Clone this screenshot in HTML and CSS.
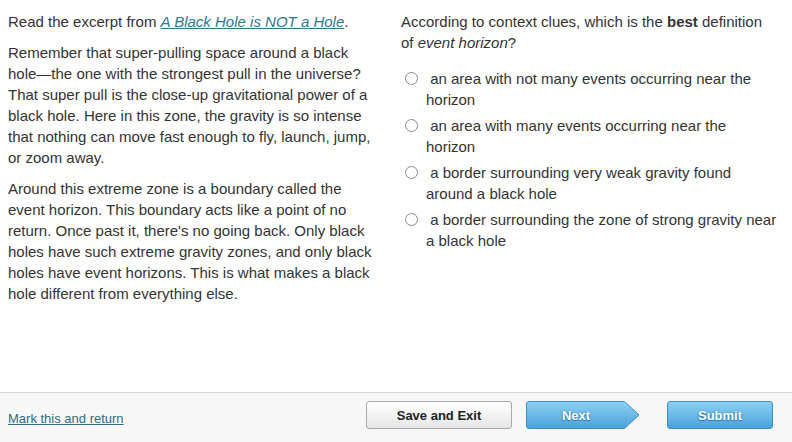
FILE: index.html
```html
<!DOCTYPE html>
<html>
<head>
<meta charset="utf-8">
<link rel="stylesheet" href="styles.css">
</head>
<body>
<div class="page">
  <main class="content">
    <section class="passage">
      <p>Read the excerpt from <a class="cite" href="#">A Black Hole is NOT a Hole</a>.</p>
      <p>Remember that super-pulling space around a black hole—the one with the strongest pull in the universe? That super pull is the close-up gravitational power of a black hole. Here in this zone, the gravity is so intense that nothing can move fast enough to fly, launch, jump, or zoom away.</p>
      <p>Around this extreme zone is a boundary called the event horizon. This boundary acts like a point of no return. Once past it, there's no going back. Only black holes have such extreme gravity zones, and only black holes have event horizons. This is what makes a black hole different from everything else.</p>
    </section>
    <section class="question">
      <p class="prompt">According to context clues, which is the <b>best</b> definition of <i>event horizon</i>?</p>
      <ul class="options">
        <li class="option"><span class="radio"></span><span class="label">&nbsp;an area with not many events occurring near the horizon</span></li>
        <li class="option"><span class="radio"></span><span class="label">&nbsp;an area with many events occurring near the horizon</span></li>
        <li class="option"><span class="radio"></span><span class="label">&nbsp;a border surrounding very weak gravity found around a black hole</span></li>
        <li class="option"><span class="radio"></span><span class="label">&nbsp;a border surrounding the zone of strong gravity near a black hole</span></li>
      </ul>
    </section>
  </main>
  <footer class="footer">
    <a class="mark" href="#">Mark this and return</a>
    <div class="actions">
      <button class="btn btn-save">Save and Exit</button>
      <button class="btn btn-next">
        <svg class="next-shape" width="114" height="28" viewBox="0 0 114 28">
          <defs>
            <linearGradient id="ng" x1="0" y1="0" x2="0" y2="1">
              <stop offset="0" stop-color="#8fd0f4"/>
              <stop offset="1" stop-color="#4aa2dc"/>
            </linearGradient>
          </defs>
          <path d="M3 0.5 H98.5 L113 14 L98.5 27.5 H3 Q0.5 27.5 0.5 25 V3 Q0.5 0.5 3 0.5 Z" fill="url(#ng)" stroke="#3f8fc4" stroke-width="1"/>
        </svg>
        <span class="next-text">Next</span>
      </button>
      <button class="btn btn-submit">Submit</button>
    </div>
  </footer>
</div>
</body>
</html>
```
FILE: styles.css
```css
html, body {
  margin: 0;
  padding: 0;
  background: #fff;
}
body {
  font-family: "Liberation Sans", Arial, sans-serif;
  color: #333;
  font-size: 15px;
  line-height: 21px;
}
.page {
  width: 792px;
  height: 442px;
  display: flex;
  flex-direction: column;
}
.content {
  flex: 1;
  display: grid;
  grid-template-columns: 368px 1fr;
  column-gap: 25px;
  padding: 11px 14px 0 8px;
}
.passage p {
  margin: 0 0 10px 0;
}
.cite {
  color: #2b7a8e;
  font-style: italic;
  text-decoration: underline;
}
.prompt {
  margin: 0 0 15px 0;
  max-width: 368px;
}
.options {
  list-style: none;
  margin: 0;
  padding: 0;
  display: flex;
  flex-direction: column;
  gap: 5px;
}
.option {
  display: flex;
  align-items: flex-start;
}
.radio {
  flex: none;
  width: 11px;
  height: 11px;
  border: 1px solid #8a8a8a;
  border-radius: 50%;
  background: #fff;
  margin: 4px 8px 0 4px;
}
.label {
  display: block;
}
.footer {
  height: 49px;
  border-top: 1px solid #d4d4d4;
  background: #f7f7f7;
  display: flex;
  align-items: center;
  justify-content: space-between;
  padding: 0 19px 0 8px;
}
.mark {
  color: #2b6f82;
  font-size: 13px;
  text-decoration: underline;
  margin-top: 2px;
}
.actions {
  display: flex;
  align-items: center;
  margin-top: -5px;
}
.btn {
  height: 28px;
  font-family: "Liberation Sans", Arial, sans-serif;
  font-weight: bold;
  font-size: 13px;
  padding: 0;
  cursor: pointer;
}
.btn-save {
  width: 146px;
  border: 1px solid #a9a9a9;
  border-radius: 3px;
  background: linear-gradient(#ffffff, #e6e6e6);
  color: #222;
  margin-right: 14px;
}
.btn-next {
  position: relative;
  width: 114px;
  border: none;
  background: none;
  color: #fff;
  margin-right: 27px;
}
.next-shape {
  position: absolute;
  left: 0;
  top: 0;
}
.next-text {
  position: relative;
  display: block;
  width: 100px;
  text-align: center;
  text-shadow: 0 0 2px #2a78ad, 0 1px 1px #2a78ad;
}
.btn-submit {
  width: 106px;
  border: 1px solid #3f8fc4;
  border-radius: 3px;
  background: linear-gradient(#8fd0f4, #4aa2dc);
  color: #fff;
  text-shadow: 0 0 2px #2a78ad, 0 1px 1px #2a78ad;
}
```
